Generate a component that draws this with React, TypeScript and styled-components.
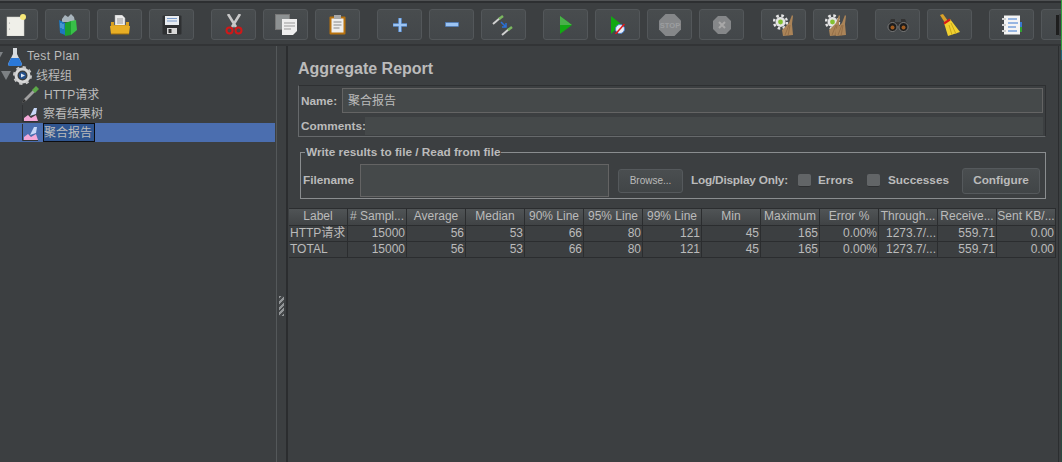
import { ReactNode } from "react";
import styled, { createGlobalStyle } from "styled-components";

const GlobalStyle = createGlobalStyle`
  html, body { margin: 0; padding: 0; background: #3c3f41; }
  * { box-sizing: border-box; }
`;

const FONT = `"Liberation Sans", "Noto Sans CJK SC", sans-serif`;

const Page = styled.div`
  position: relative;
  width: 1062px;
  height: 462px;
  overflow: hidden;
  display: flex;
  flex-direction: column;
  background: #3c3f41;
  color: #bbbbbb;
  font-family: ${FONT};
  font-size: 12px;
`;

const Toolbar = styled.div`
  height: 46px;
  flex: none;
  display: flex;
  padding-top: 9px;
  margin-left: -7px;
  width: 1100px;
  background: linear-gradient(#505254 0 1px, #2d2f31 1px 3px, #3c3f41 3px 44px, #323436 44px);
`;

const ToolGroup = styled.div`
  display: flex;
  gap: 7px;
  margin-right: 17px;
`;

const ToolButton = styled.div`
  width: 45px;
  height: 31px;
  display: flex;
  align-items: center;
  justify-content: center;
  border: 1px solid #53575a;
  border-radius: 3px;
  background: linear-gradient(#484c4e, #43474a);
`;

const Main = styled.div`
  flex: 1;
  display: flex;
  min-height: 0;
`;

const TreePane = styled.div`
  width: 277px;
  flex: none;
  padding-top: 1px;
  border-right: 1px solid #54585a;
`;

const TreeRow = styled.div<{ $indent: number; $gap?: number; $selected?: boolean }>`
  height: 19px;
  display: flex;
  align-items: center;
  gap: ${(p) => p.$gap ?? 4}px;
  width: 275px;
  padding-left: ${(p) => p.$indent}px;
  background: ${(p) => (p.$selected ? "#4b6eaf" : "transparent")};
`;

const Toggle = styled.span<{ $left: number; $after: number }>`
  width: 0;
  height: 0;
  flex: none;
  margin-left: ${(p) => p.$left}px;
  margin-right: ${(p) => p.$after}px;
  border-left: 5px solid transparent;
  border-right: 5px solid transparent;
  border-top: 9px solid #7d8184;
`;

const TreeLabel = styled.span<{ $tracking?: number; $top?: number }>`
  padding-top: ${(p) => p.$top ?? 2}px;
  line-height: 17px;
  white-space: nowrap;
  letter-spacing: ${(p) => p.$tracking ?? 0}px;
`;

const SelectedLabel = styled.span`
  height: 19px;
  width: 52px;
  padding: 1px 0 0 1px;
  line-height: 18px;
  white-space: nowrap;
  background: #2f558f;
  outline: 1px solid #0d0d10;
  outline-offset: -1px;
`;

const Splitter = styled.div`
  width: 11px;
  flex: none;
  padding: 250px 5px 0 2px;
  border-right: 2px solid #2b2d2f;
`;

const Grip = styled.div`
  width: 5px;
  height: 20px;
  background: repeating-linear-gradient(135deg, #929597 0 2px, #46494b 2px 4px);
`;

const Panel = styled.div`
  width: 771px;
  flex: none;
  padding-top: 13px;
  border-right: 1px solid #2b2d2f;
`;

const Title = styled.div`
  font-size: 16px;
  font-weight: bold;
  line-height: 20px;
  margin-left: 10px;
  margin-bottom: 6px;
`;

const NameBox = styled.div`
  width: 748px;
  height: 52px;
  margin-left: 10px;
  border: 1px solid #66696b;
  border-color: #2e3032 #2e3032 #66696b #66696b;
  padding: 2px;
  display: flex;
  flex-direction: column;
  gap: 4px;
`;

const FieldRow = styled.div`
  display: flex;
  align-items: center;
  gap: 5px;
`;

const FieldLabel = styled.label`
  font-weight: bold;
  font-size: 11.8px;
  white-space: nowrap;
`;

const NameInput = styled.div`
  width: 703px;
  height: 25px;
  padding-left: 5px;
  line-height: 24px;
  background: #45494a;
  border: 1px solid #646464;
`;

const CommentsInput = styled.div`
  width: 680px;
  height: 18px;
  margin-left: -6px;
  background: #45494a;
`;

const FileSet = styled.fieldset`
  width: 746px;
  min-width: 0;
  height: 54px;
  margin: 8px 0 0 12px;
  padding: 5px 0 0 2px;
  border: 1px solid #8a8d8f;
`;

const FileLegend = styled.legend`
  font-weight: bold;
  font-size: 11.8px;
  padding: 0 1px;
  margin-left: 2px;
  line-height: 14px;
`;

const FileBody = styled.div`
  display: flex;
  align-items: center;
  height: 33px;
`;

const FileInput = styled.div`
  width: 249px;
  height: 33px;
  margin-left: 5px;
  flex: none;
  background: #45494a;
  border: 1px solid #646464;
`;

const Button = styled.div<{ $small?: boolean }>`
  display: flex;
  flex: none;
  align-items: center;
  justify-content: center;
  border: 1px solid #55595c;
  border-radius: 3px;
  background: linear-gradient(#4a4e50, #414547);
  white-space: nowrap;
  padding-bottom: 1px;
  width: ${(p) => (p.$small ? 65 : 78)}px;
  height: ${(p) => (p.$small ? 24 : 26)}px;
  font-size: ${(p) => (p.$small ? 10 : 11.8)}px;
  font-weight: ${(p) => (p.$small ? "normal" : "bold")};
  margin-left: ${(p) => (p.$small ? 9 : 11)}px;
`;

const BoldText = styled.span<{ $left: number; $width: number; $tracking?: number }>`
  flex: none;
  font-weight: bold;
  font-size: 11.8px;
  white-space: nowrap;
  padding-bottom: 2px;
  width: ${(p) => p.$width}px;
  margin-left: ${(p) => p.$left}px;
  letter-spacing: ${(p) => p.$tracking ?? 0}px;
`;

const Check = styled.span<{ $left: number }>`
  width: 13px;
  height: 13px;
  flex: none;
  margin-left: ${(p) => p.$left}px;
  border-radius: 2px;
  background: #626567;
  border-bottom: 1px solid #2e3032;
`;

const Table = styled.div`
  width: 767px;
  margin: 9px 0 0 1px;
  display: grid;
  grid-template-columns: repeat(13, 59px);
`;

const HeadCell = styled.div`
  height: 18px;
  line-height: 15px;
  text-align: center;
  white-space: nowrap;
  overflow: hidden;
  background: linear-gradient(#505456, #404345);
  border-top: 1px solid #2b2d2f;
  border-right: 1px solid #2b2d2f;
  border-bottom: 1px solid #2b2d2f;
`;

const Cell = styled.div<{ $text?: boolean }>`
  height: 16px;
  line-height: 15px;
  padding: 0 1px;
  text-align: ${(p) => (p.$text ? "left" : "right")};
  white-space: nowrap;
  overflow: hidden;
  border-right: 1px solid #2b2d2f;
  border-bottom: 1px solid #2b2d2f;
`;

const EdgeLine = styled.div`
  position: absolute;
  top: 0;
  right: 0;
  width: 1px;
  height: 462px;
  background: linear-gradient(#2f9e3f 0 50px, #1f6a78 50px 60px, #2a4a40 60px);
`;

const NewIcon = () => (
  <svg width="20" height="22" viewBox="0 0 20 22">
    <rect x="1" y="3" width="17" height="19" fill="#efefe9" stroke="#cfcfc8" strokeWidth="0.5" />
    <circle cx="3.5" cy="9" r="0.6" fill="#999" />
    <circle cx="3.5" cy="15" r="0.6" fill="#999" />
    <circle cx="17" cy="3" r="3" fill="#f8e878" />
  </svg>
);

const TemplatesIcon = () => (
  <svg width="20" height="22" viewBox="0 0 20 22">
    <path d="M4 5l3-4 3 2 3-3 3 3 1 5H4z" fill="#a8b4bc" />
    <path d="M1 6l6 3v12l-5-2z" fill="#1c78c0" />
    <path d="M3 9v5M5 10v5" stroke="#8ac0e8" strokeWidth="0.8" />
    <path d="M7 9l6-2v14l-6 1z" fill="#1ca030" />
    <path d="M13 7l5-1 1 10-6 5z" fill="#38c048" />
  </svg>
);

const OpenIcon = () => (
  <svg width="20" height="20" viewBox="0 0 20 20">
    <path d="M5 0h7l3 3v9H5z" fill="#ececec" stroke="#aaa" strokeWidth="0.5" />
    <path d="M7 4h6M7 6h6M7 8h6" stroke="#999" />
    <path d="M1 7h3v3h12V7h3v12H1z" fill="#d8a020" />
    <path d="M0 11h20l-1 8H1z" fill="#e8ae24" />
    <path d="M1 19h18" stroke="#9a6c10" />
  </svg>
);

const SaveIcon = () => (
  <svg width="20" height="20" viewBox="0 0 20 20">
    <rect x="0.5" y="0.5" width="19" height="19" rx="1" fill="#2e3032" />
    <rect x="3" y="1" width="14" height="9" fill="#e8ecf0" />
    <path d="M5 3.5h10M5 6h10" stroke="#7a9ccc" />
    <rect x="5" y="13" width="10" height="6" fill="#d8d8d8" />
    <rect x="6.5" y="14" width="3" height="4" fill="#333" />
  </svg>
);

const CutIcon = () => (
  <svg width="18" height="21" viewBox="0 0 18 21">
    <path d="M3 0l8 13M15 0l-8 13" stroke="#c8c8c8" strokeWidth="2.6" />
    <circle cx="4.500" cy="16.500" r="3" fill="none" stroke="#d01818" strokeWidth="2" />
    <circle cx="13.500" cy="16.500" r="3" fill="none" stroke="#d01818" strokeWidth="2" />
  </svg>
);

const CopyIcon = () => (
  <svg width="22" height="21" viewBox="0 0 22 21">
    <rect x="0.5" y="0.5" width="14" height="15" fill="#8d9192" stroke="#777" />
    <path d="M7 5h15v12l-4 4H7z" fill="#eeeeee" />
    <path d="M9 9h11M9 12h11M9 15h7" stroke="#999" />
  </svg>
);

const PasteIcon = () => (
  <svg width="17" height="20" viewBox="0 0 17 20">
    <rect x="0.500" y="1.500" width="16" height="18" rx="1" fill="#b8720e" />
    <rect x="2.500" y="3.500" width="12" height="14" fill="#eeeeee" />
    <rect x="5" y="0" width="7" height="4" fill="#a8a8a8" />
    <path d="M4.500 7h8M4.500 10h8M4.500 13h6" stroke="#888" />
  </svg>
);

const PlusIcon = () => (
  <svg width="14" height="14" viewBox="0 0 14 14">
    <path d="M5.500 0h3v5.500H14v3H8.500V14h-3V8.500H0v-3h5.500z" fill="#9cc4f2" stroke="#3e78c8" strokeWidth="0.5" />
  </svg>
);

const MinusIcon = () => (
  <svg width="14" height="5" viewBox="0 0 14 5">
    <rect x="0.500" y="0.500" width="13" height="4" fill="#9cc4f2" stroke="#3e78c8" strokeWidth="0.5" />
  </svg>
);

const ToggleIcon = () => (
  <svg width="24" height="22" viewBox="0 0 24 22">
    <path d="M1 10l7-6" stroke="#d0d0d0" strokeWidth="2" />
    <path d="M7 5l4-3" stroke="#7cb860" strokeWidth="2.500" />
    <path d="M10 21l7-6" stroke="#d0d0d0" strokeWidth="2" />
    <path d="M16 16l4-3" stroke="#7cb860" strokeWidth="2.500" />
    <path d="M9 8l5 5M14 9v4h-4" stroke="#2a70d8" strokeWidth="1.500" fill="none" />
  </svg>
);

const PlayIcon = () => (
  <svg width="12" height="18" viewBox="0 0 12 18">
    <path d="M0 0l12 9-12 9z" fill="#12a812" />
    <path d="M0 0l12 9H0z" fill="#4ab04a" />
  </svg>
);

const PlayNoTimerIcon = () => (
  <svg width="14" height="18" viewBox="0 0 14 18">
    <path d="M0 0l10 8-10 10z" fill="#12a812" />
    <circle cx="9" cy="13" r="4.500" fill="#e8eef8" stroke="#4a80d0" />
    <path d="M4.500 18l9-10" stroke="#e01818" strokeWidth="1.500" />
  </svg>
);

const StopText = styled.text`
  font-family: "Liberation Sans", sans-serif;
  font-size: 7.5px;
  font-weight: bold;
  fill: #9c9ea0;
`;

const StopIcon = () => (
  <svg width="22" height="22" viewBox="0 0 22 22">
    <path d="M6.500 0h9L22 6.500v9L15.500 22h-9L0 15.500v-9z" fill="#858789" />
    <StopText x="11" y="14" textAnchor="middle">
      STOP
    </StopText>
  </svg>
);

const ShutdownIcon = () => (
  <svg width="18" height="18" viewBox="0 0 18 18">
    <path d="M5 0h8l5 5v8l-5 5H5l-5-5V5z" fill="#858789" />
    <path d="M6 6l6 6M12 6l-6 6" stroke="#a8a8a8" strokeWidth="2" />
  </svg>
);

const Cog = ({ x }: { x: number }) => (
  <g transform={`translate(${x} 0)`}>
    <circle cx="7.500" cy="8" r="5" fill="#e4e4e4" />
    <circle cx="7.500" cy="8" r="6.500" fill="none" stroke="#e4e4e4" strokeWidth="2.400" strokeDasharray="2.600 2.500" />
    <circle cx="7.500" cy="8" r="2.400" fill="#84c030" />
  </g>
);

const Broom = ({ x }: { x: number }) => (
  <g transform={`translate(${x} 0)`}>
    <path d="M6 22l-1-6 7-7 3-8 1 1-1 8 1 11z" fill="#ab8458" />
    <path d="M8 21l4-10M11 22l2-11" stroke="#8a6640" strokeWidth="0.7" />
  </g>
);

const ClearIcon = () => (
  <svg width="21" height="22" viewBox="0 0 21 22">
    <Cog x={0} />
    <Broom x={4} />
  </svg>
);

const ClearAllIcon = () => (
  <svg width="22" height="22" viewBox="0 0 22 22">
    <Cog x={0} />
    <Broom x={-1} />
    <Broom x={5} />
  </svg>
);

const SearchIcon = () => (
  <svg width="22" height="14" viewBox="0 0 22 14">
    <path d="M4 1h4v3h6V1h4l3 7H1z" fill="#333" />
    <circle cx="5.500" cy="9" r="4.500" fill="#1e1e1e" stroke="#8a8a8a" strokeWidth="0.8" />
    <circle cx="16.500" cy="9" r="4.500" fill="#1e1e1e" stroke="#8a8a8a" strokeWidth="0.8" />
    <circle cx="5.500" cy="9.500" r="2" fill="#a05a1e" />
    <circle cx="16.500" cy="9.500" r="2" fill="#a05a1e" />
  </svg>
);

const BroomYellowIcon = () => (
  <svg width="22" height="22" viewBox="0 0 22 22">
    <path d="M1 1l3-1 5 7-3 2z" fill="#d8a028" />
    <path d="M5 9l6-4 10 13-12 4z" fill="#f0d030" />
    <path d="M4.500 8.500l6-4 1 2-6 4z" fill="#d81818" />
    <path d="M10 11l3 10M12 9l5 11" stroke="#c8a818" />
  </svg>
);

const ListIcon = () => (
  <svg width="20" height="20" viewBox="0 0 20 20">
    <rect x="2" y="0.500" width="16" height="19" fill="#f4f4f4" />
    <path d="M6 4h9M6 8h10M6 12h8M6 16h9" stroke="#3a78d0" strokeWidth="1.200" />
    <path d="M0 4h4M0 10h4M0 16h4" stroke="#d0d0d0" strokeWidth="2" />
    <rect x="18" y="7" width="2" height="5" fill="#3a78d0" />
    <rect x="18" y="12" width="2" height="5" fill="#30a030" />
  </svg>
);

const PartialIcon = () => (
  <svg width="20" height="24" viewBox="0 0 20 24">
    <rect x="2" y="2" width="3" height="20" fill="#1e1e1e" />
    <rect x="5" y="1" width="14" height="22" fill="#3a3c3e" />
  </svg>
);

const FlaskIcon = () => (
  <svg width="14" height="18" viewBox="0 0 14 18" style={{ flex: "none" }}>
    <path d="M5 0h4v6l5 10-1 2H1l-1-2 5-10z" fill="#d8dce0" />
    <path d="M3 10h8l3 6-1 2H1l-1-2z" fill="#2a78d8" />
  </svg>
);

const GearIcon = () => (
  <svg width="19" height="19" viewBox="0 0 19 19" style={{ flex: "none" }}>
    <circle cx="9.500" cy="9.500" r="6.500" fill="none" stroke="#d8d8d8" strokeWidth="3" />
    <circle cx="9.500" cy="9.500" r="8.300" fill="none" stroke="#c8c8c8" strokeWidth="2.400" strokeDasharray="3.200 3.300" />
    <circle cx="9.500" cy="9.500" r="3.500" fill="#24508c" />
    <path d="M8 7.500l4 2-4 2z" fill="#dfe8f4" />
  </svg>
);

const DropperIcon = () => (
  <svg width="19" height="19" viewBox="0 0 19 19" style={{ flex: "none" }}>
    <path d="M1 18l2-4 9-9 2 2-9 9z" fill="#a0a0a0" />
    <path d="M1 18l2-4 2 2z" fill="#2c2c2c" />
    <path d="M11 5l4-4 3 3-4 4z" fill="#5ca848" />
  </svg>
);

const GraphIcon = () => (
  <svg width="16" height="17" viewBox="0 0 16 17" style={{ flex: "none" }}>
    <path d="M0.500 0v16.500H16" fill="none" stroke="#303234" />
    <path d="M2 16v-3l4-3 3 3 5-3 2 6z" fill="#f4a8d8" />
    <path d="M8 11l4-8h3l-1 6z" fill="#c8d8f8" />
  </svg>
);

type Tool = { id: string; icon: ReactNode };

const TOOL_GROUPS: Tool[][] = [
  [
    { id: "new", icon: <NewIcon /> },
    { id: "templates", icon: <TemplatesIcon /> },
    { id: "open", icon: <OpenIcon /> },
    { id: "save", icon: <SaveIcon /> },
  ],
  [
    { id: "cut", icon: <CutIcon /> },
    { id: "copy", icon: <CopyIcon /> },
    { id: "paste", icon: <PasteIcon /> },
  ],
  [
    { id: "expand", icon: <PlusIcon /> },
    { id: "collapse", icon: <MinusIcon /> },
    { id: "toggle", icon: <ToggleIcon /> },
  ],
  [
    { id: "start", icon: <PlayIcon /> },
    { id: "start-no-timers", icon: <PlayNoTimerIcon /> },
    { id: "stop", icon: <StopIcon /> },
    { id: "shutdown", icon: <ShutdownIcon /> },
  ],
  [
    { id: "clear", icon: <ClearIcon /> },
    { id: "clear-all", icon: <ClearAllIcon /> },
  ],
  [
    { id: "search", icon: <SearchIcon /> },
    { id: "reset-search", icon: <BroomYellowIcon /> },
  ],
  [
    { id: "functions", icon: <ListIcon /> },
    { id: "help", icon: <PartialIcon /> },
  ],
];

const COLUMNS = [
  "Label", "# Sampl...", "Average", "Median", "90% Line", "95% Line", "99% Line",
  "Min", "Maximum", "Error %", "Through...", "Receive...", "Sent KB/...",
];

const ROWS = [
  ["HTTP请求", "15000", "56", "53", "66", "80", "121", "45", "165", "0.00%", "1273.7/...", "559.71", "0.00"],
  ["TOTAL", "15000", "56", "53", "66", "80", "121", "45", "165", "0.00%", "1273.7/...", "559.71", "0.00"],
];

export default function App() {
  return (
    <Page>
      <GlobalStyle />
      <Toolbar>
        {TOOL_GROUPS.map((group) => (
          <ToolGroup key={group[0].id}>
            {group.map((tool) => (
              <ToolButton key={tool.id}>{tool.icon}</ToolButton>
            ))}
          </ToolGroup>
        ))}
      </Toolbar>
      <Main>
        <TreePane>
          <TreeRow $indent={0} $gap={5}>
            <Toggle $left={-7} $after={0} />
            <FlaskIcon />
            <TreeLabel $tracking={0.35} $top={0}>Test Plan</TreeLabel>
          </TreeRow>
          <TreeRow $indent={0}>
            <Toggle $left={1} $after={-2} />
            <GearIcon />
            <TreeLabel>线程组</TreeLabel>
          </TreeRow>
          <TreeRow $indent={21}>
            <DropperIcon />
            <TreeLabel>HTTP请求</TreeLabel>
          </TreeRow>
          <TreeRow $indent={22} $gap={5}>
            <GraphIcon />
            <TreeLabel>察看结果树</TreeLabel>
          </TreeRow>
          <TreeRow $indent={22} $gap={5} $selected>
            <GraphIcon />
            <SelectedLabel>聚合报告</SelectedLabel>
          </TreeRow>
        </TreePane>
        <Splitter>
          <Grip />
        </Splitter>
        <Panel>
          <Title>Aggregate Report</Title>
          <NameBox>
            <FieldRow>
              <FieldLabel>Name:</FieldLabel>
              <NameInput>聚合报告</NameInput>
            </FieldRow>
            <FieldRow>
              <FieldLabel>Comments:</FieldLabel>
              <CommentsInput />
            </FieldRow>
          </NameBox>
          <FileSet>
            <FileLegend>Write results to file / Read from file</FileLegend>
            <FileBody>
              <BoldText $left={0} $width={52}>Filename</BoldText>
              <FileInput />
              <Button $small>Browse...</Button>
              <BoldText $left={8} $width={97} $tracking={-0.2}>Log/Display Only:</BoldText>
              <Check $left={10} />
              <BoldText $left={7} $width={36}>Errors</BoldText>
              <Check $left={13} />
              <BoldText $left={8} $width={63}>Successes</BoldText>
              <Button>Configure</Button>
            </FileBody>
          </FileSet>
          <Table>
            {COLUMNS.map((col) => (
              <HeadCell key={col}>{col}</HeadCell>
            ))}
            {ROWS.map((row) =>
              row.map((value, i) => (
                <Cell key={row[0] + i} $text={i === 0}>
                  {value}
                </Cell>
              )),
            )}
          </Table>
        </Panel>
      </Main>
      <EdgeLine />
    </Page>
  );
}
